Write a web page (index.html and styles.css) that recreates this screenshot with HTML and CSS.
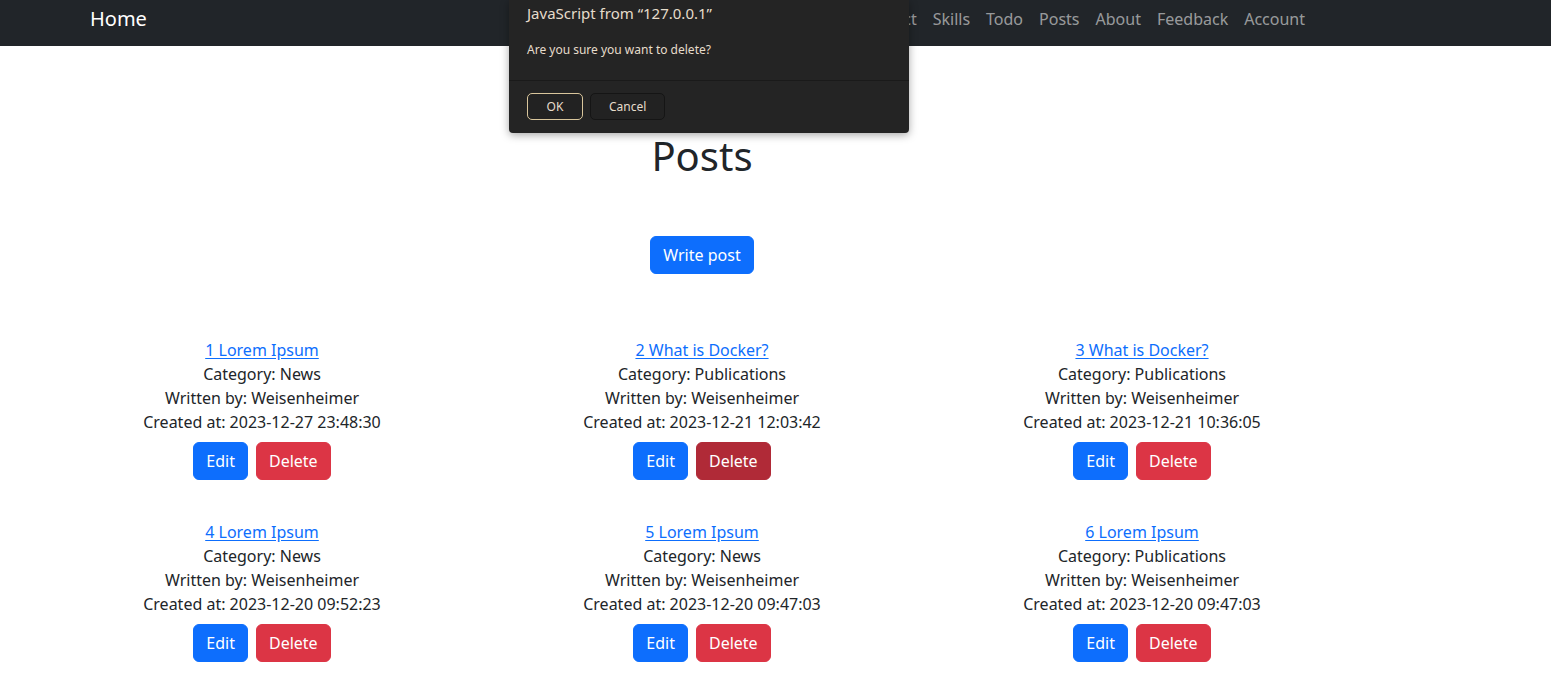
FILE: index.html
```html
<!DOCTYPE html>
<html lang="en">
<head>
<meta charset="utf-8">
<title>Posts</title>
<link rel="stylesheet" href="styles.css">
</head>
<body>
<nav class="navbar">
  <div class="nav-inner">
    <a class="brand" href="#">Home</a>
    <ul class="nav-links">
      <li><a href="#">Contact</a></li>
      <li><a href="#">Skills</a></li>
      <li><a href="#">Todo</a></li>
      <li><a href="#">Posts</a></li>
      <li><a href="#">About</a></li>
      <li><a href="#">Feedback</a></li>
      <li><a href="#">Account</a></li>
    </ul>
  </div>
</nav>

<main class="page">
  <h1 class="title">Posts</h1>
  <div class="write-wrap"><a class="btn btn-primary" href="#">Write post</a></div>

  <div class="posts">
    <div class="post">
      <a class="post-link" href="#">1 Lorem Ipsum</a>
      <div>Category: News</div>
      <div>Written by: Weisenheimer</div>
      <div>Created at: 2023-12-27 23:48:30</div>
      <div class="actions"><a class="btn btn-primary" href="#">Edit</a><a class="btn btn-danger" href="#">Delete</a></div>
    </div>
    <div class="post">
      <a class="post-link" href="#">2 What is Docker?</a>
      <div>Category: Publications</div>
      <div>Written by: Weisenheimer</div>
      <div>Created at: 2023-12-21 12:03:42</div>
      <div class="actions"><a class="btn btn-primary" href="#">Edit</a><a class="btn btn-danger active" href="#">Delete</a></div>
    </div>
    <div class="post">
      <a class="post-link" href="#">3 What is Docker?</a>
      <div>Category: Publications</div>
      <div>Written by: Weisenheimer</div>
      <div>Created at: 2023-12-21 10:36:05</div>
      <div class="actions"><a class="btn btn-primary" href="#">Edit</a><a class="btn btn-danger" href="#">Delete</a></div>
    </div>
    <div class="post">
      <a class="post-link" href="#">4 Lorem Ipsum</a>
      <div>Category: News</div>
      <div>Written by: Weisenheimer</div>
      <div>Created at: 2023-12-20 09:52:23</div>
      <div class="actions"><a class="btn btn-primary" href="#">Edit</a><a class="btn btn-danger" href="#">Delete</a></div>
    </div>
    <div class="post">
      <a class="post-link" href="#">5 Lorem Ipsum</a>
      <div>Category: News</div>
      <div>Written by: Weisenheimer</div>
      <div>Created at: 2023-12-20 09:47:03</div>
      <div class="actions"><a class="btn btn-primary" href="#">Edit</a><a class="btn btn-danger" href="#">Delete</a></div>
    </div>
    <div class="post">
      <a class="post-link" href="#">6 Lorem Ipsum</a>
      <div>Category: Publications</div>
      <div>Written by: Weisenheimer</div>
      <div>Created at: 2023-12-20 09:47:03</div>
      <div class="actions"><a class="btn btn-primary" href="#">Edit</a><a class="btn btn-danger" href="#">Delete</a></div>
    </div>
  </div>
</main>

<div class="dialog" role="alertdialog">
  <div class="dialog-body">
    <div class="dialog-title">JavaScript from “127.0.0.1”</div>
    <div class="dialog-msg">Are you sure you want to delete?</div>
  </div>
  <div class="dialog-foot">
    <button class="dbtn dbtn-ok">OK</button>
    <button class="dbtn">Cancel</button>
  </div>
</div>
</body>
</html>
```

FILE: styles.css
```css
* { box-sizing: border-box; }
html, body { margin: 0; padding: 0; }
body {
  font-family: "Noto Sans", "Open Sans", sans-serif;
  font-size: 16px;
  line-height: 24px;
  color: #212529;
  background: #fff;
}
a { text-decoration: none; }

.navbar {
  background: #212529;
  height: 46px;
}
.nav-inner {
  width: 1320px;
  margin-left: 41px;
  padding: 0 48px 0 49px;
  height: 100%;
  display: flex;
  align-items: flex-start;
  justify-content: space-between;
}
.brand {
  color: #fff;
  font-size: 20px;
  line-height: 30px;
  padding-top: 4px;
}
.nav-links {
  list-style: none;
  margin: 0;
  padding: 0;
  display: flex;
}
.nav-links a {
  display: block;
  color: rgba(255,255,255,0.55);
  padding: 7px 8px 0;
  line-height: 24px;
}

.page {
  width: 1320px;
  margin-left: 42px;
}
.title {
  text-align: center;
  font-size: 40px;
  font-weight: 400;
  line-height: 48px;
  margin: 86px 0 0;
}
.write-wrap {
  text-align: center;
  margin-top: 56px;
}
.btn {
  display: inline-block;
  padding: 6px 12px;
  font-size: 16px;
  line-height: 24px;
  border-radius: 6px;
  color: #fff;
  border: 1px solid transparent;
}
.btn-primary { background: #0d6efd; border-color: #0d6efd; }
.btn-danger { background: #dc3545; border-color: #dc3545; }
.btn-danger.active { background: #b02a37; border-color: #b02a37; }

.posts {
  display: grid;
  grid-template-columns: repeat(3, 1fr);
  row-gap: 40px;
  margin-top: 64px;
  text-align: center;
}
.post-link {
  color: #0d6efd;
  text-decoration: underline;
  text-underline-offset: 2px;
}
.actions {
  display: flex;
  justify-content: center;
  gap: 8px;
  margin-top: 8px;
}

.dialog {
  position: absolute;
  left: 509px;
  top: 0;
  width: 400px;
  height: 133px;
  background: #242424;
  border-radius: 0 0 4px 4px;
  box-shadow: 0 2px 8px rgba(0,0,0,0.35);
  font-family: "Noto Sans", "Open Sans", sans-serif;
  color: #e6dccb;
}
.dialog-body {
  padding: 2px 18px 0;
  height: 81px;
  border-bottom: 1px solid #1a1a1a;
}
.dialog-title {
  font-size: 15px;
  line-height: 22px;
}
.dialog-msg {
  font-size: 12px;
  line-height: 18px;
  margin-top: 17px;
}
.dialog-foot {
  display: flex;
  gap: 7px;
  padding: 12px 18px 0;
}
.dbtn {
  font-family: inherit;
  font-size: 12px;
  color: #e6dccb;
  background: #222;
  border: 1px solid #151515;
  border-radius: 5px;
  height: 27px;
  padding: 0 18px;
}
.dbtn-ok {
  border-color: #d9c69c;
  width: 56px;
  padding: 0;
}
```
